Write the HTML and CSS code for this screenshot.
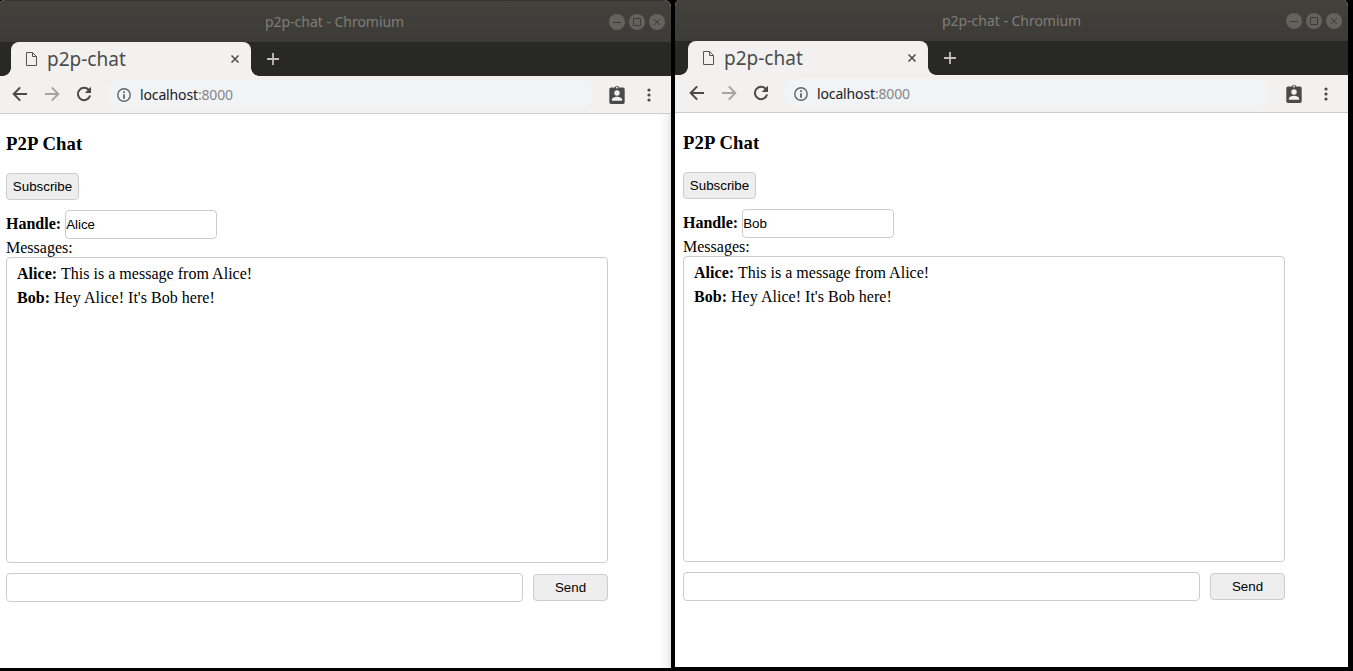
FILE: index.html
```
<!DOCTYPE html>
<html lang="en">
<head>
<meta charset="utf-8">
<title>p2p-chat</title>
<link rel="stylesheet" href="styles.css">
</head>
<body>
<svg width="0" height="0" class="defs">
  <symbol id="file" viewBox="0 0 11 14"><path d="M.5.5h6l4 4v9H.5zM6.500.5v4h4" fill="none" stroke="#555" stroke-width="1"/></symbol>
  <symbol id="back" viewBox="0 0 16 16"><path d="M15 8H2M8.200 1.400 1.700 8l6.500 6.600" fill="none" stroke="currentColor" stroke-width="2"/></symbol>
  <symbol id="reload" viewBox="0 0 16 16"><path d="M13.200 4.400A6.200 6.200 0 1 0 14.100 9.600" fill="none" stroke="#4a4a4a" stroke-width="2"/><path d="M15 .8v6.200H8.800z" fill="#4a4a4a"/></symbol>
  <symbol id="info" viewBox="0 0 14 14"><circle cx="7" cy="7" r="6.200" fill="none" stroke="#5f6368" stroke-width="1.400"/><path d="M6.100 3.300h1.800V5H6.100zM6.100 6.200h1.800v4.600H6.100z" fill="#5f6368"/></symbol>
  <symbol id="badge" viewBox="0 0 16 19"><path fill-rule="evenodd" d="M2 2.500h3.800a2.300 2.300 0 0 1 4.400 0H14a1.700 1.700 0 0 1 1.700 1.700v13A1.700 1.700 0 0 1 14 18.900H2a1.700 1.700 0 0 1-1.700-1.700v-13A1.700 1.700 0 0 1 2 2.500zm6-.9a.9.9 0 1 0 0 1.900.9.9 0 0 0 0-1.900zM8 5.300a2.700 2.700 0 1 0 0 5.400 2.700 2.700 0 0 0 0-5.400zM2.900 15.800h10.200v-1.300c0-1.900-3.400-2.800-5.100-2.800s-5.100.9-5.100 2.800z" fill="#4a4a4a"/></symbol>
  <symbol id="dots" viewBox="0 0 4 14"><circle cx="2" cy="2" r="1.600"/><circle cx="2" cy="7" r="1.600"/><circle cx="2" cy="12" r="1.600"/></symbol>
  <symbol id="controls" viewBox="0 0 56 16"><g fill="#64625c"><circle cx="8" cy="8" r="8"/><circle cx="28" cy="8" r="8"/><circle cx="48" cy="8" r="8"/></g><path d="M4 8.500h8M24.500 4.500h7v7h-7zM45 5l6 6M51 5l-6 6" fill="none" stroke="#3c3b37"/></symbol>
</svg>
<main class="desktop">
  <section class="window window-left">
    <header class="titlebar"><span class="title">p2p-chat - Chromium</span><svg class="controls"><use href="#controls"/></svg></header>
    <nav class="tabstrip">
      <div class="tab"><svg class="file"><use href="#file"/></svg><span class="tab-name">p2p-chat</span><svg class="close" viewBox="0 0 8 8"><path d="M.5.5l7 7M7.500.5l-7 7" stroke="#4a4a4a" stroke-width="1.500"/></svg></div>
      <svg class="plus" viewBox="0 0 12 12"><path d="M6 0v12M0 6h12" stroke="#c3c0b9" stroke-width="1.800"/></svg>
    </nav>
    <div class="toolbar">
      <svg class="nav"><use href="#back"/></svg><svg class="nav forward"><use href="#back"/></svg><svg class="nav"><use href="#reload"/></svg>
      <div class="address"><svg class="info"><use href="#info"/></svg><span class="url">localhost<span class="port">:8000</span></span></div>
      <svg class="badge"><use href="#badge"/></svg><svg class="dots"><use href="#dots"/></svg>
    </div>
    <div class="page">
      <h3 class="heading">P2P Chat</h3>
      <button class="button subscribe">Subscribe</button>
      <div class="handle"><b class="handle-label">Handle:</b><input class="field name" value="Alice"></div>
      <div class="label">Messages:</div>
      <div class="messages"><div><b>Alice:</b> This is a message from Alice!</div><div><b>Bob:</b> Hey Alice! It's Bob here!</div></div>
      <div class="compose"><input class="field message"><button class="button send">Send</button></div>
    </div>
  </section>
  <section class="window window-right">
    <header class="titlebar"><span class="title">p2p-chat - Chromium</span><svg class="controls"><use href="#controls"/></svg></header>
    <nav class="tabstrip">
      <div class="tab"><svg class="file"><use href="#file"/></svg><span class="tab-name">p2p-chat</span><svg class="close" viewBox="0 0 8 8"><path d="M.5.5l7 7M7.500.5l-7 7" stroke="#4a4a4a" stroke-width="1.500"/></svg></div>
      <svg class="plus" viewBox="0 0 12 12"><path d="M6 0v12M0 6h12" stroke="#c3c0b9" stroke-width="1.800"/></svg>
    </nav>
    <div class="toolbar">
      <svg class="nav"><use href="#back"/></svg><svg class="nav forward"><use href="#back"/></svg><svg class="nav"><use href="#reload"/></svg>
      <div class="address"><svg class="info"><use href="#info"/></svg><span class="url">localhost<span class="port">:8000</span></span></div>
      <svg class="badge"><use href="#badge"/></svg><svg class="dots"><use href="#dots"/></svg>
    </div>
    <div class="page">
      <h3 class="heading">P2P Chat</h3>
      <button class="button subscribe">Subscribe</button>
      <div class="handle"><b class="handle-label">Handle:</b><input class="field name" value="Bob"></div>
      <div class="label">Messages:</div>
      <div class="messages"><div><b>Alice:</b> This is a message from Alice!</div><div><b>Bob:</b> Hey Alice! It's Bob here!</div></div>
      <div class="compose"><input class="field message"><button class="button send">Send</button></div>
    </div>
  </section>
</main>
</body>
</html>
```
FILE: styles.css
```
* { box-sizing: border-box; }
body { margin: 0; background: #000; overflow: hidden; }
svg { display: block; flex: none; }
.defs { position: absolute; }
.desktop { display: flex; gap: 4px; height: 671px; overflow: hidden; }
.window { width: 673px; height: 668px; flex: none; display: flex; flex-direction: column; background: #fff; border-radius: 7px 7px 0 0; overflow: hidden; }
.window-left { margin-left: -2px; }
.window-right { margin-top: -1px; }
.window-left .page { background: linear-gradient(to left, #e6e6e6 0, #f5f5f5 4px, #fff 12px); }
.titlebar { height: 42px; flex: none; display: flex; align-items: center; padding: 0 6px 0 267px; background: linear-gradient(#42413c, #3c3b37); border-top: 1px solid #33322e; }
.title { flex: 1; font: 14px "Noto Sans", sans-serif; letter-spacing: -0.03px; color: #807d78; white-space: nowrap; }
.controls { width: 56px; height: 16px; }
.tabstrip { height: 34px; flex: none; display: flex; align-items: center; padding-left: 13px; background: #282826; }
.tab { position: relative; width: 240px; height: 34px; display: flex; align-items: center; padding: 0 12px 0 15px; background: #f2f1f0; border-radius: 8px 8px 0 0; }
.tab::before, .tab::after { content: ""; position: absolute; bottom: 0; width: 8px; height: 8px; }
.tab::before { left: -8px; background: radial-gradient(circle at 0 0, transparent 7.500px, #f2f1f0 8px); }
.tab::after { right: -8px; background: radial-gradient(circle at 100% 0, transparent 7.500px, #f2f1f0 8px); }
.file { width: 11px; height: 14px; }
.tab-name { flex: 1; margin-left: 10px; font: 19px/34px "Noto Sans", sans-serif; color: #4c4c4c; }
.close { width: 8px; height: 8px; }
.plus { width: 12px; height: 12px; margin-left: 16px; }
.toolbar { height: 38px; flex: none; display: flex; align-items: center; gap: 16px; padding: 0 20px 1px 14px; background: #f2f1f0; border-bottom: 1px solid #ccc; }
.nav { width: 16px; height: 16px; color: #4a4a4a; }
.forward { color: #a5a5a5; transform: scaleX(-1); }
.address { flex: 1; height: 28px; display: flex; align-items: center; gap: 9px; margin: 0 -1px 0 -1px; padding: 2px 0 0 10px; background: #f1f3f4; border-radius: 14px; }
.info { width: 14px; height: 14px; }
.url { font: 14px/26px "Noto Sans", sans-serif; letter-spacing: -0.14px; color: #202124; }
.port { color: #85878a; }
.badge { width: 16px; height: 19px; }
.dots { width: 4px; height: 14px; margin: 1px 0 0 6px; fill: #4a4a4a; }
.page { flex: 1; padding: 19px 8px 0; font: 16px/18px "Liberation Serif", serif; color: #000; }
.heading { margin: 0 0 19px; font-size: 18.720px; line-height: 21px; letter-spacing: 0.14px; }
.button { display: block; height: 27px; padding: 0; background: #eee; border: 1px solid #ccc; border-radius: 4px; font: 13.333px "Liberation Sans", sans-serif; color: #000; }
.subscribe { width: 73px; }
.handle { display: flex; align-items: center; gap: 4px; height: 29px; margin-top: 10px; }
.handle-label { padding-bottom: 2px; }
.field { height: 29px; margin: 0; padding: 0; background: #fff; border: 1px solid #ccc; border-radius: 4px; font: 13.333px "Liberation Sans", sans-serif; color: #000; }
.name { width: 152px; }
.label { height: 18px; }
.messages { width: 602px; height: 306px; padding: 4px 10px; background: #fff; border: 1px solid #ccc; border-radius: 4px; line-height: 24px; letter-spacing: 0.025px; }
.compose { display: flex; align-items: center; gap: 10px; margin-top: 10px; }
.message { width: 517px; }
.send { width: 75px; }
```
